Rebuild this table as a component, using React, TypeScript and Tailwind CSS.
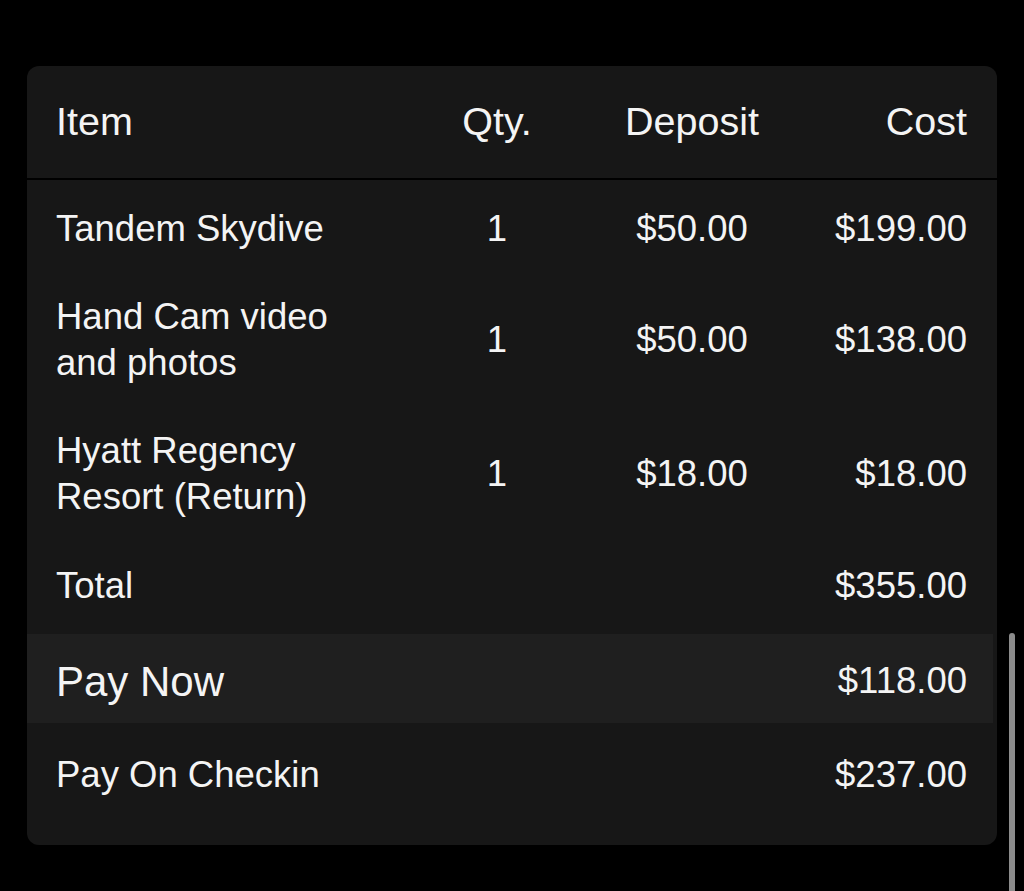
const items = [
  { name: "Tandem Skydive", qty: 1, deposit: "$50.00", cost: "$199.00" },
  { name: "Hand Cam video and photos", qty: 1, deposit: "$50.00", cost: "$138.00" },
  { name: "Hyatt Regency Resort (Return)", qty: 1, deposit: "$18.00", cost: "$18.00" },
];

const cols = "grid grid-cols-[376px_130px_260px_1fr] pl-[29px] pr-[30px]";

const App = () => {
  return (
    <div
      className="relative min-h-[891px] bg-black pt-[66px] px-[27px] text-[#f4f4f4] overflow-hidden"
      style={{ fontFamily: '"Liberation Sans", Arial, sans-serif' }}
    >
      <div className="w-[970px] rounded-[12px] bg-[#171717] pb-[18px]">
        {/* header */}
        <div className={`${cols} h-[114px] items-center text-[39.5px] border-b-2 border-black`}>
          <span>Item</span>
          <span className="text-center">Qty.</span>
          <span className="text-center">Deposit</span>
          <span className="text-right">Cost</span>
        </div>

        {/* line items */}
        {items.map((item, i) => (
          <div
            key={item.name}
            className={`${cols} ${i === 0 ? "pt-[26px]" : "pt-[21px]"} pb-[21px] items-center text-[36.5px] leading-[46px]`}
          >
            <span className="max-w-[320px]">{item.name}</span>
            <span className="text-center">{item.qty}</span>
            <span className="text-center">{item.deposit}</span>
            <span className="text-right">{item.cost}</span>
          </div>
        ))}

        {/* totals */}
        <div className="flex items-center justify-between pl-[29px] pr-[30px] pt-[22px] pb-[25px] text-[36.5px] leading-[46px]">
          <span>Total</span>
          <span>$355.00</span>
        </div>
        <div className="flex h-[89px] mr-[4px] items-center justify-between bg-[#1f1f1f] pl-[29px] pr-[26px]">
          <span className="text-[42px] pt-[5px]">Pay Now</span>
          <span className="text-[36.5px] pt-[5px]">$118.00</span>
        </div>
        <div className="flex h-[104px] items-center justify-between pl-[29px] pr-[30px] text-[36.5px]">
          <span>Pay On Checkin</span>
          <span>$237.00</span>
        </div>
      </div>

      {/* scroll indicator */}
      <div className="absolute left-[1009px] top-[633px] h-[300px] w-[6px] rounded-full bg-[#8c8c8c]" />
    </div>
  );
};

export default App;
